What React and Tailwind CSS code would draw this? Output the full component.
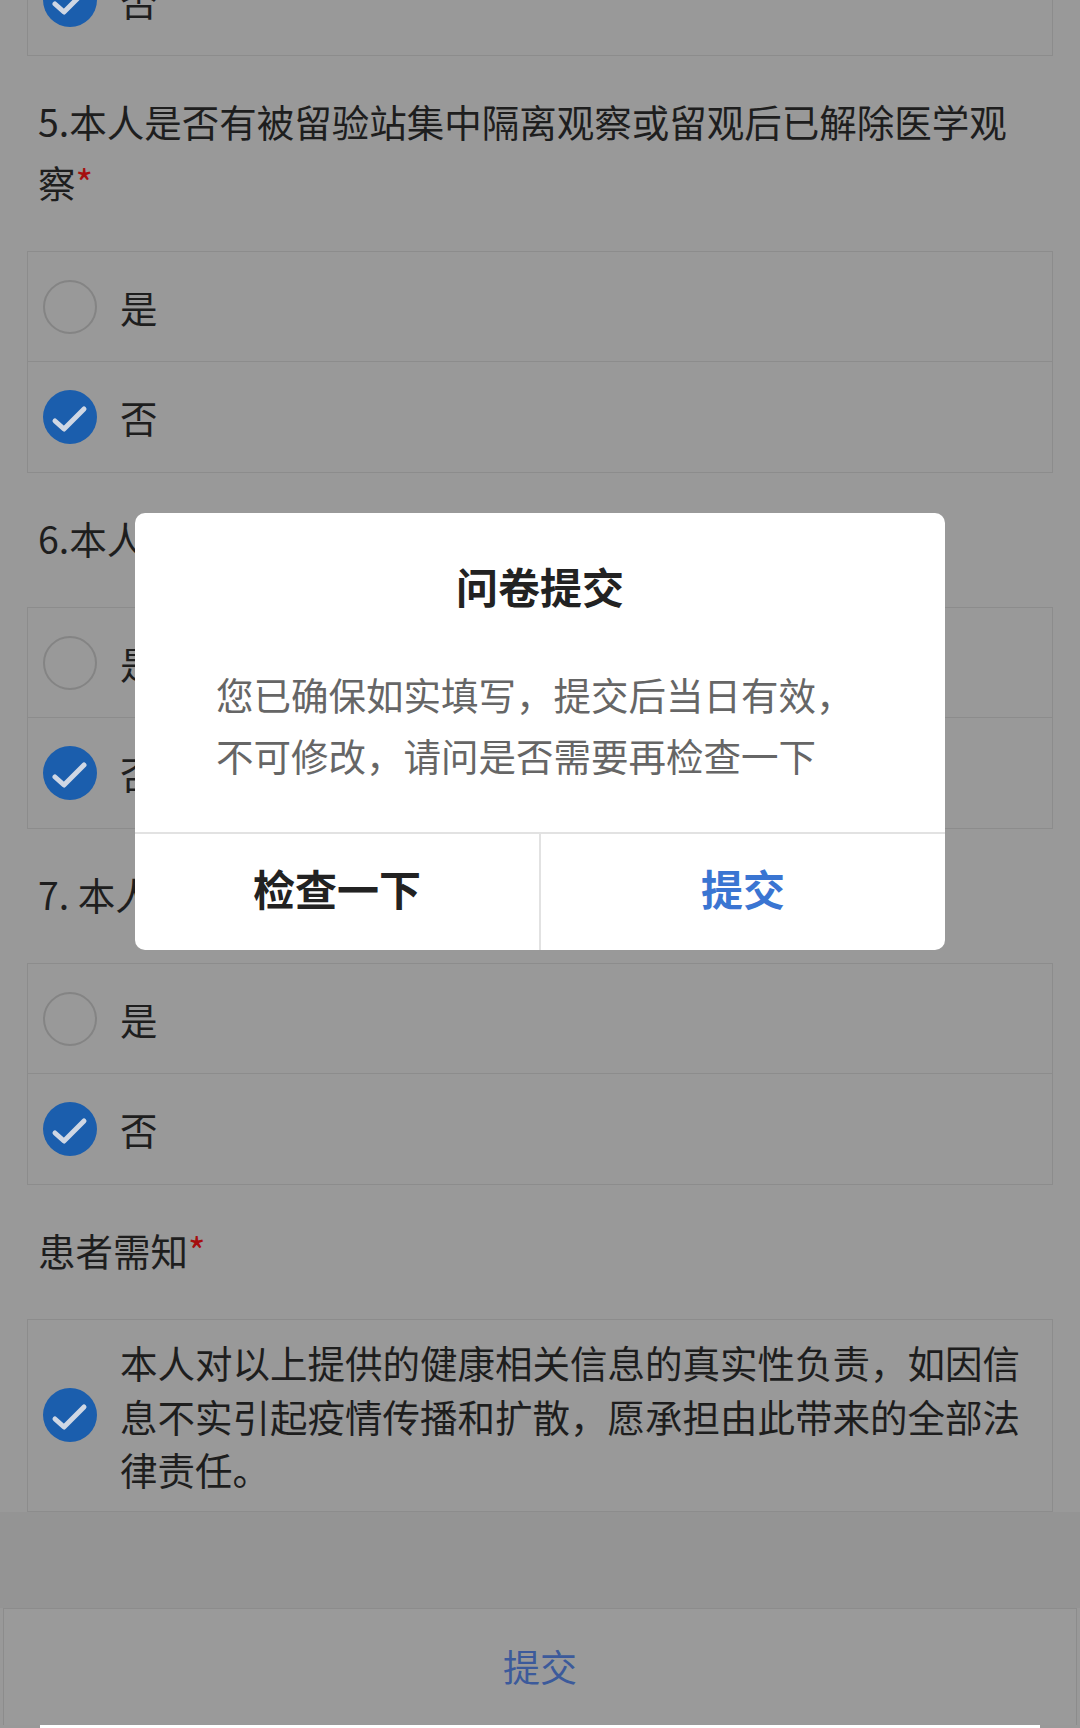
import React from 'react';

const font = "font-['Noto_Sans_CJK_SC','Noto_Sans',sans-serif]";

function Mark({ checked }) {
  if (!checked) return <span className="block w-[54px] h-[54px] rounded-full border-2 border-[#848484] shrink-0" />;
  return (
    <svg width="54" height="54" viewBox="0 0 54 54" className="shrink-0">
      <circle cx="27" cy="27" r="27" fill="#1b5ead" />
      <path d="M12 31 L21 39 L41 19" fill="none" stroke="#cfd7e4" strokeWidth="5" strokeLinecap="round" strokeLinejoin="round" />
    </svg>
  );
}

function Options({ value = '否' }) {
  return (
    <div className="border border-[#8c8c8c] divide-y divide-[#8c8c8c]">
      {['是', '否'].map(o => (
        <div key={o} className="flex items-center h-[110px] pl-[15px] gap-[23px]">
          <Mark checked={o === value} />
          <span className="text-[37.5px] leading-none">{o}</span>
        </div>
      ))}
    </div>
  );
}

function Label({ children }) {
  return (
    <p className="pl-[11px] pr-[24px] pt-[34px] pb-[39px] text-[37.5px] leading-[61px]">
      {children}<span className="text-[#a50f0f]">*</span>
    </p>
  );
}

export default function App() {
  return (
    <div className={`relative w-[1080px] h-[1728px] overflow-hidden bg-[#999999] text-[#1e1e1e] ${font}`}>
      <div className="flex flex-col h-full">
        <div className="px-[27px] -mt-[166px]">
          <Options />
          <Label>5.本人是否有被留验站集中隔离观察或留观后已解除医学观察</Label>
          <Options />
          <Label>6.本人是否有发热、咳嗽等不适症状</Label>
          <Options />
          <Label>7. 本人是否有境外旅居史</Label>
          <Options />
          <Label>患者需知</Label>
          <div className="border border-[#8c8c8c] flex items-center pl-[15px] pr-[20px] py-[15px] gap-[23px]">
            <Mark checked />
            <p className="text-[37.5px] leading-[53.5px]">本人对以上提供的健康相关信息的真实性负责，如因信息不实引起疫情传播和扩散，愿承担由此带来的全部法律责任。</p>
          </div>
        </div>
        <div className="flex-1 bg-[#949494]" />
        <div className="h-[117px] mx-[3px] border-t border-x border-[#8c8c8c] bg-[#9a9a9a] flex items-center justify-center text-[37px] text-[#3c5a9b]">
          提交
        </div>
        <div className="h-[3px] mx-[40px] bg-white" />
      </div>

      {/* dialog */}
      <div className="absolute left-[135px] top-[513px] w-[810px] h-[437px] rounded-[10px] bg-white flex flex-col overflow-hidden">
        <div className="h-[319px] pt-[48px] shrink-0">
          <h2 className="text-center text-[42px] leading-[50px] font-bold text-[#222]">问卷提交</h2>
          <p className="mt-[52px] px-[81px] text-[37.5px] leading-[61px] text-[#666]">您已确保如实填写，提交后当日有效，不可修改，请问是否需要再检查一下</p>
        </div>
        <div className="flex-1 flex border-t-2 border-[#e2e2e2]">
          <button className="flex-1 flex items-center justify-center pb-[10px] border-r-2 border-[#e2e2e2] text-[42px] font-bold text-[#222]">检查一下</button>
          <button className="flex-1 flex items-center justify-center pb-[10px] text-[42px] font-bold text-[#3a75d2]">提交</button>
        </div>
      </div>
    </div>
  );
}
